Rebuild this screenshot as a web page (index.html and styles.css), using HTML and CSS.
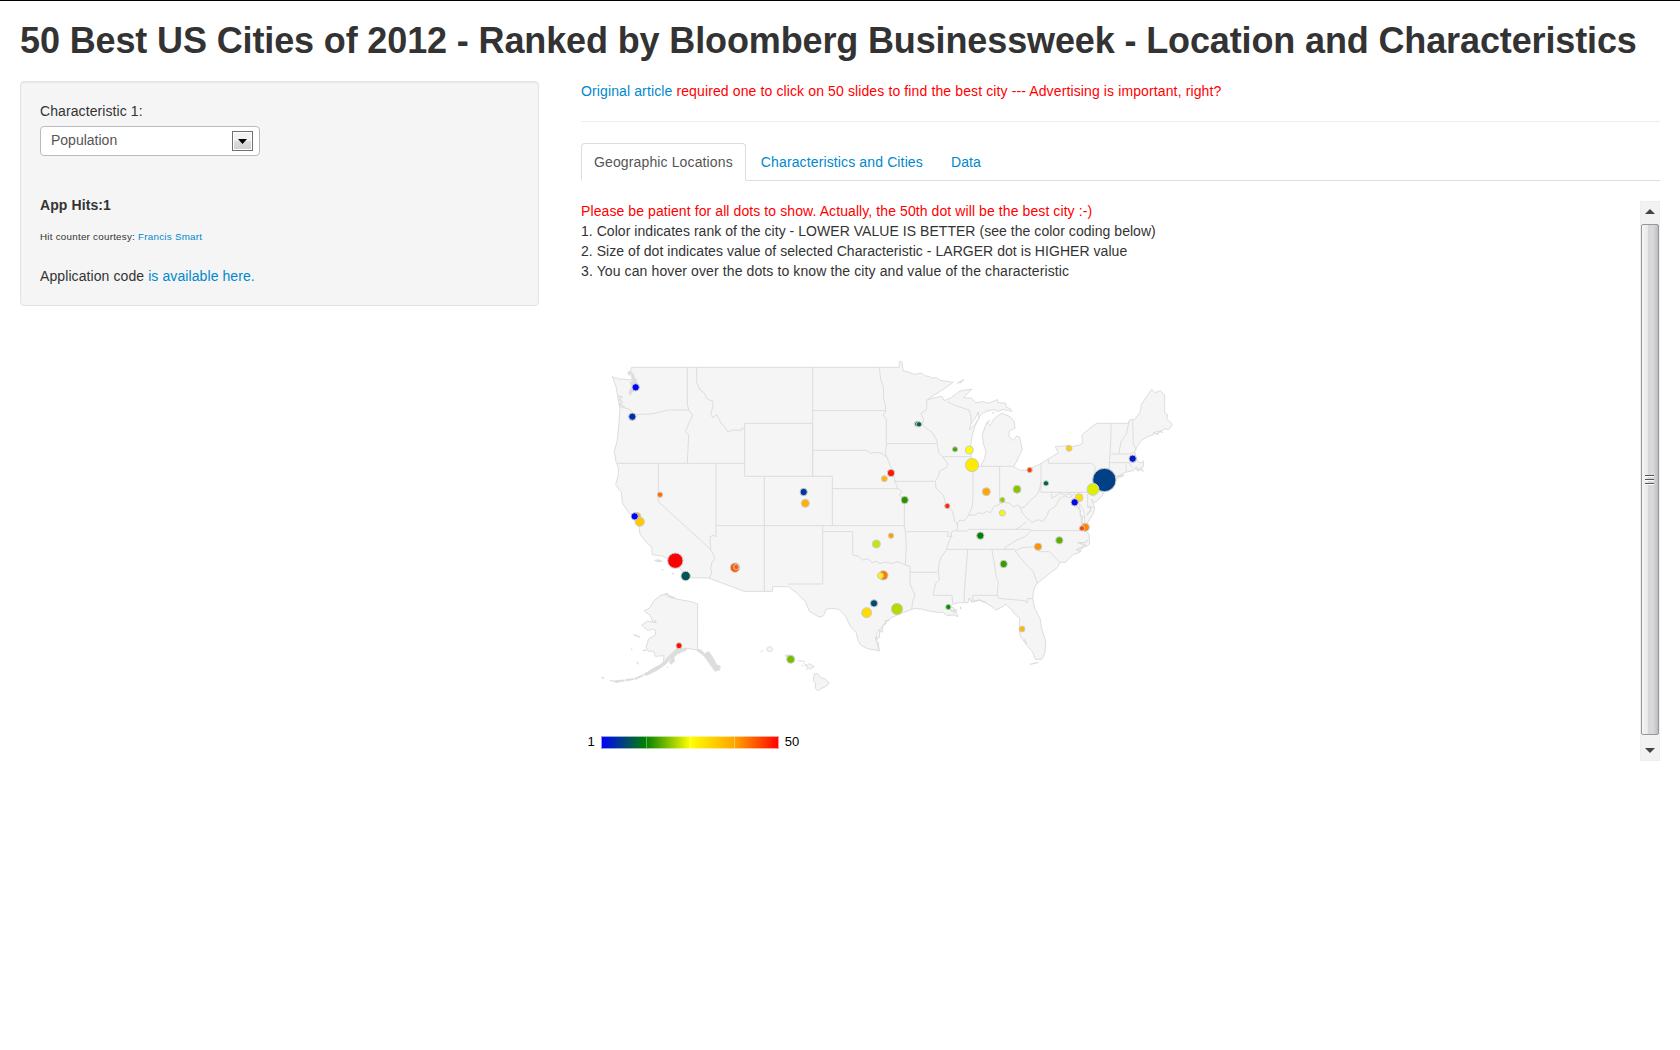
FILE: index.html
```html
<!DOCTYPE html>
<html lang="en">
<head>
<meta charset="utf-8">
<title>50 Best US Cities of 2012</title>
<link rel="stylesheet" href="styles.css">
</head>
<body>
<h1>50 Best US Cities of 2012 - Ranked by Bloomberg Businessweek - Location and Characteristics</h1>
<div class="row">
  <aside class="well">
    <label>Characteristic 1:</label>
    <div class="select"><span>Population</span><span class="arrow"><svg width="9" height="5" viewBox="0 0 9 5"><path d="M0 0H9L4.5 5Z"/></svg></span></div>
    <h5>App Hits:1</h5>
    <p class="small">Hit counter courtesy: <a href="#">Francis Smart</a></p>
    <p>Application code <a href="#">is available here.</a></p>
  </aside>
  <main>
    <p class="red lead"><a href="#">Original article</a> required one to click on 50 slides to find the best city --- Advertising is important, right?</p>
    <hr>
    <nav class="tabs"><a class="active" href="#">Geographic Locations</a><a href="#">Characteristics and Cities</a><a href="#">Data</a></nav>
    <div class="pane">
      <div class="content">
        <div class="red">Please be patient for all dots to show. Actually, the 50th dot will be the best city :-)</div>
        <div class="tight">1. Color indicates rank of the city - LOWER VALUE IS BETTER (see the color coding below)</div>
        <div class="tight">2. Size of dot indicates value of selected Characteristic - LARGER dot is HIGHER value</div>
        <div class="wide">3. You can hover over the dots to know the city and value of the characteristic</div>
        <svg class="map" width="600" height="350" viewBox="-27 -27 1800 1050">
          <!-- contiguous states -->
          <path class="land" d="M67 79L74 84 82 84 91 88 100 87 118 90 126 88 127 78 122 66 124 52H928V34L936 36 938 55 941 63 958 67 972 73 990 70 997 70 1005 78 1018 79 1026 85 1040 83 1051 91 1069 94 1090 97 1060 118 1022 142 1010 151 1030 144 1056 139 1062 152 1082 144 1100 130 1111 123 1132 119 1146 118 1130 132 1121 143 1145 145 1158 158 1180 155 1195 160 1222 149 1224 158 1248 160 1248 170 1263 178 1266 184 1240 178 1225 184 1211 179 1194 182 1178 190 1166 202 1165 186 1156 204 1143 222 1138 239 1153 226 1168 202 1155 228 1147 255 1141 290 1142 310 1150 340 1158 349H1172L1184 325 1188 305 1180 280 1177 255 1183 237 1191 216 1200 227 1210 210 1222 198 1237 190 1260 200 1273 215 1275 235 1258 243 1256 260 1270 271 1280 258 1288 261 1292 275 1297 300 1287 318 1281 333 1271 350 1292 362 1318 358 1354 340 1405 308 1396 290 1430 287 1437 291 1470 285 1479 277 1475 256 1500 234 1520 220H1616L1620 209 1635 208 1651 185 1654 164 1670 140 1685 118 1695 128 1711 122 1724 135V188L1732 193 1731 208 1738 213 1747 225 1735 239 1725 236 1711 246 1697 245 1689 255 1675 259 1655 270 1642 289 1634 305 1638 322 1645 337 1657 338 1660 332 1660 350 1645 360 1640 350 1630 362 1605 367 1585 378 1600 377 1577 387 1560 392 1556 397 1548 410 1536 438 1520 454 1509 458 1505 448 1514 475 1510 491 1500 506 1488 527 1484 540 1497 552 1499 582 1490 588 1478 592 1468 608 1451 613 1432 630 1427 637 1410 637 1402 653 1380 669 1358 688 1340 701 1331 720 1328 745 1334 775 1351 808 1354 832 1367 873 1365 908 1356 927 1337 929 1327 905 1310 885 1290 857 1288 822 1290 805 1279 797 1264 779 1248 763 1235 772 1217 780 1207 770 1184 757 1165 750 1148 755 1137 744 1134 758 1105 758 1090 762 1075 770 1092 774 1098 785 1104 800 1090 795 1073 797 1058 787 1040 787 1018 783 995 777 975 775 955 782 930 792 910 800 890 812 878 830 862 844 858 863 863 885 868 903 856 900 832 896 812 885 803 868 799 848 782 831 767 799 747 778 725 775 708 778 701 797 690 802 672 793 657 782 646 754 635 745 622 730 595 710H548V724H463L355 684 300 683 285 678 268 652 252 630 230 625 218 618 187 614 185 592 165 572 150 552 148 535 140 518 128 499 115 487 97 458 94 427 77 404 85 375 85 352 78 335 73 305 82 270 87 220 90 175 85 150 78 110Z"/>
          <!-- Chesapeake Bay -->
          <path class="water" d="M1468 460L1480 480 1484 505 1482 530 1474 512Z"/>
          <!-- state lines -->
          <g class="lines">
            <path d="M292 52V165L297 180 308 196 299 215 286 245 296 254 292 340M90 170L105 174 120 178 128 192 140 195 155 192 170 193 195 190 235 180H297M82 340H464M320 52V98L330 120 342 128 352 148 368 153 369 168 362 193 368 203 380 194 395 222 405 232 413 246 428 240 453 241 456 233 464 240M464 220H668V379H727V527M464 220V379H668M205 340V455L362 598M378 340V560L370 556 360 560 362 598 375 625 365 639 362 655 365 670 358 684M523 379V724M378 527H943M668 52V379M668 182H886M668 301H830L842 310 860 307 875 310 888 320M727 416H925"/>
            <path d="M868 52L872 88 880 110 881 148 887 170 886 188 879 194 889 207V283L886 310 891 322 902 350 912 382 921 412 936 425 928 435 943 450V527L946 545 949 588 946 645M889 281H1040M910 394H1032M698 527V545H788V615L805 618 818 630 834 626 845 638 860 634 870 641 885 636 905 641 924 635 946 645 960 650V703L975 735 968 754 965 780M946 545H1075L1072 559H1088M960 667H1042M698 545V702H595"/>
            <path d="M1010 151V178L993 190 1001 210 996 223 1007 233 1027 248 1040 270 1043 290 1046 308 1058 320 1074 342 1070 352 1050 362 1045 379 1036 392 1038 415 1060 435 1067 460 1088 485 1094 513 1103 525 1102 540 1085 545 1083 560 1075 580 1070 598 1055 620 1048 635 1045 660 1048 690 1037 700 1029 736H1086L1088 760M1058 320H1142M1072 155L1098 167 1137 180 1143 200 1143 222M1149 350V440L1147 470 1135 495M1100 525L1110 510 1122 513 1135 496 1154 495 1166 488 1178 491 1190 484 1202 488 1211 470 1228 463 1240 456 1258 460 1270 470 1285 465 1292 475 1305 469 1320 452 1341 434 1348 420 1353 395M1229 350V460M1172 349H1271M1353 340V427H1505M1098 543H1134V538H1320V542H1492"/>
            <path d="M1070 598H1276M1292 475L1296 488 1310 504 1326 517 1345 509 1358 515 1370 499 1378 480 1395 470 1410 445 1425 438 1438 444 1455 430M1275 538L1292 530 1308 515M1320 545L1305 560 1280 570 1265 580 1248 590 1244 598M1275 603L1295 593 1340 590 1348 605H1378L1410 637M1275 603L1305 640 1330 665 1342 700M1206 600L1220 685 1225 695 1222 730 1225 745 1305 752 1308 757 1312 758V745L1328 747M1147 736H1222M1147 736L1150 752M1133 600L1123 725V757"/>
            <path d="M1375 328V340H1505L1516 350 1513 373 1526 389M1505 427L1512 440M1493 430V472H1514M1563 220V258L1558 340 1560 370M1617 213L1610 250 1593 275 1587 310M1628 210L1630 280 1638 300M1563 312H1622L1635 305M1558 338H1617L1625 352M1608 340V365M1385 430V445L1410 430 1425 435 1440 430 1447 444 1456 470"/>
          </g>
          <!-- inlets and small islands -->
          <path class="sound" d="M113 66L122 62 124 72 116 76ZM124 76L130 68 133 82 139 90 142 100 137 120 127 126 121 136 116 130 120 118 126 112 120 96 128 92Z"/>
          <g class="islands">
            <path d="M82 138L96 140 88 150 97 156 88 163 98 167 104 172M193 632L205 630 216 634 200 635M215 658L220 660M247 669L251 673M1102 100L1120 90 1110 99M1192 218L1200 211M1207 190L1212 187M1578 380L1603 375M1636 355L1645 362 1653 355 1660 365M1456 465L1473 482 1470 493 1479 501 1474 518 1480 530M1498 465L1503 480 1490 495M1493 570L1485 578 1464 578 1488 586 1460 599 1473 605M1690 247L1702 253 1710 242 1718 248M860 858L857 870 868 860 869 840 876 846 878 827 889 819 885 813 898 812M864 875L867 902M1138 744L1145 756 1170 750 1188 758M1073 766L1085 783 1100 780 1090 790M1112 770V778M1303 868L1310 881M1320 943L1345 937"/>
          </g>
          <!-- Alaska -->
          <path class="land" d="M227 732L237 741 255 746 280 751 304 755 323 762V900L290 895 274 901 261 895 250 908 235 930 220 940 222 917 196 919 191 904 174 903 168 891 176 867 196 855 197 841 187 837 175 842 155 826 172 813 190 817 180 796 163 783 180 773 191 753 210 737Z"/>
          <path class="chain" d="M75 994L105 991 135 987 165 973 200 955 220 939"/>
          <path class="sound" d="M165 971L195 952 216 942 238 916 262 897 288 894 290 900 262 912 252 922 254 934 243 943 238 938 246 920 228 942 205 959 168 977Z"/>
          <path class="sound" d="M322 898L334 900 344 912 352 905 358 907 372 928 380 944 391 948 389 960 375 964 362 946 348 926 338 914 322 903Z"/>
          <path class="islands" d="M222 736L230 730 236 737 255 744M195 810L198 818 185 815M158 902L169 900M130 854L150 861M123 896L127 899M140 935L145 943M34 981L42 986M60 991L75 995 86 998M231 950L233 953"/>
          <path class="speck" d="M339 834L344 836M445 856H449"/>
          <!-- Hawaii -->
          <path class="land" d="M530 895L540 889 549 897 544 904H533ZM673 972L681 970 692 982 707 988 718 1000 705 1010 693 1016 684 1023 676 1015 677 1001 670 991ZM647 948L658 941 673 950 659 957ZM585 916L597 914 604 920 595 930ZM623 932L644 934M635 945L641 949M640 940L649 945M648 959L654 956M512 907L518 900"/>
          <g class="dots">
            <circle cx="137" cy="112" r="11" fill="#00f"/><circle cx="127" cy="200" r="11" fill="#002dae"/><circle cx="210" cy="434" r="8" fill="#ff6d00"/>
            <circle cx="140" cy="499" r="12" fill="#ffb500"/><circle cx="149" cy="515" r="14" fill="#ffc800"/><circle cx="134" cy="499" r="11" fill="#00f"/>
            <circle cx="256" cy="632" r="23" fill="#f00"/><circle cx="287" cy="678" r="14" fill="#005457"/><circle cx="435" cy="653" r="14" fill="#ff5b00"/><circle cx="439" cy="651" r="8" fill="#ff5b00"/>
            <circle cx="641" cy="426" r="11" fill="#00389b"/><circle cx="646" cy="460" r="12" fill="#ffb000"/><circle cx="903" cy="369" r="11" fill="#ff1600"/><circle cx="883" cy="386" r="9" fill="#ffb500"/>
            <circle cx="944" cy="450" r="11" fill="#269200"/><circle cx="903" cy="557" r="8" fill="#ff9e00"/><circle cx="859" cy="582" r="12" fill="#c8e600"/><circle cx="880" cy="676" r="14" fill="#ff7900"/><circle cx="871" cy="677" r="9" fill="#fff000"/>
            <circle cx="852" cy="760" r="11" fill="#004b70"/><circle cx="830" cy="788" r="15" fill="#ffdc00"/><circle cx="921" cy="777" r="17" fill="#b4da00"/><circle cx="602" cy="928" r="12" fill="#78bc00"/><circle cx="267" cy="887" r="9" fill="#ff0f00"/>
            <circle cx="982" cy="222" r="8" fill="#006d28"/><circle cx="987" cy="223" r="8" fill="#005e4b"/><circle cx="1095" cy="298" r="8" fill="#4ba500"/><circle cx="1138" cy="300" r="12" fill="#ff0"/><circle cx="1146" cy="345" r="20" fill="#ffeb00"/>
            <circle cx="1319" cy="360" r="8" fill="#ff3800"/><circle cx="1072" cy="468" r="8" fill="#ff2800"/><circle cx="1189" cy="425" r="12" fill="#ffa500"/><circle cx="1281" cy="418" r="12" fill="#87c400"/><circle cx="1237" cy="450" r="8" fill="#96cb00"/><circle cx="1237" cy="489" r="9" fill="#f5fa00"/>
            <circle cx="1171" cy="557" r="11" fill="#008000"/><circle cx="1241" cy="642" r="11" fill="#379b00"/><circle cx="1344" cy="590" r="11" fill="#ff9200"/><circle cx="1408" cy="571" r="11" fill="#5ab000"/><circle cx="1075" cy="771" r="8" fill="#089000"/><circle cx="1296" cy="837" r="9" fill="#ffb700"/>
            <circle cx="1437" cy="295" r="9" fill="#ffcd00"/><circle cx="1368" cy="400" r="8" fill="#006633"/><circle cx="1628" cy="326" r="11" fill="#0019cb"/><circle cx="1543" cy="390" r="35" fill="#004086"/><circle cx="1509" cy="418" r="18" fill="#dcf000"/><circle cx="1467" cy="443" r="12" fill="#ffe100"/><circle cx="1454" cy="457" r="11" fill="#000be9"/><circle cx="1486" cy="532" r="12" fill="#ff8600"/><circle cx="1476" cy="535" r="8" fill="#ff4700"/>
          </g>
        </svg>
        <div class="legend"><span>1</span><div class="scale"><i></i><i></i><i></i><i></i></div><span>50</span></div>
      </div>
      <div class="scrollbar">
        <svg width="10" height="5" viewBox="0 0 10 5"><path d="M0 5L5 0 10 5Z"/></svg>
        <div class="thumb"><b></b><b></b><b></b></div>
        <svg width="10" height="5" viewBox="0 0 10 5"><path d="M0 0H10L5 5Z"/></svg>
      </div>
    </div>
  </main>
</div>
</body>
</html>
```

FILE: styles.css
```css
* { box-sizing: border-box; }
body { margin: 0; padding: 20px 20px 0; height: 1050px; border-top: 1px solid #000; background: #fff; color: #333; font: 14px/20px "Liberation Sans", Arial, sans-serif; letter-spacing: .09px; overflow: hidden; }
a { color: #08c; text-decoration: none; }
p { margin: 0; }
h1 { margin: 0 0 20px; font-size: 36px; line-height: 40px; letter-spacing: -.13px; white-space: nowrap; }
.row { display: flex; gap: 42px; align-items: flex-start; }
.well { width: 519px; height: 225px; padding: 19px; border: 1px solid #e3e3e3; border-radius: 4px; background: #f5f5f5; box-shadow: inset 0 1px 1px rgba(0,0,0,.05); }
label { display: block; margin-bottom: 5px; }
.select { display: flex; justify-content: space-between; align-items: center; width: 220px; height: 30px; padding: 0 6px 2px 10px; border: 1px solid #bbb; border-radius: 4px; background: #fff; color: #555; letter-spacing: 0; }
.arrow { display: flex; align-items: center; justify-content: center; width: 21px; height: 20px; margin-top: 2px; border: 1px solid #707070; background: linear-gradient(#f2f2f2 50%, #ddd 50%, #cfcfcf); box-shadow: inset 0 0 0 1px #fff; }
h5 { margin: 39px 0 11px; font-size: 14px; line-height: 20px; }
.small { margin-bottom: 19px; font-size: 9.8px; line-height: 21px; letter-spacing: .25px; }
main { width: 1079px; }
.red { color: #f00; }
.lead { letter-spacing: .12px; }
.tight { letter-spacing: .045px; }
.wide { letter-spacing: .11px; }
hr { margin: 20px 0; border: 0; border-top: 1px solid #eee; }
.tabs { display: flex; gap: 2px; height: 39px; margin: 0 0 20px; padding-top: 1px; border-bottom: 1px solid #ddd; letter-spacing: .13px; }
.tabs a { height: 38px; padding: 8px 12px; border: 1px solid transparent; border-radius: 4px 4px 0 0; }
.tabs .active { border-color: #ddd #ddd #fff; background: #fff; color: #555; }
.pane { display: flex; justify-content: space-between; height: 560px; }
.map { display: block; margin-top: 60px; }
.land { fill: #f5f5f5; stroke: #ddd; stroke-width: 3; stroke-linejoin: round; }
.water { fill: #fff; stroke: #ddd; stroke-width: 3; }
.lines { fill: none; stroke: #ddd; stroke-width: 3; stroke-linejoin: round; }
.islands { fill: none; stroke: #ddd; stroke-width: 4; stroke-linejoin: round; }
.speck { fill: none; stroke: #eee; stroke-width: 2; }
.sound { fill: #ddd; stroke: #ddd; stroke-width: 2; }
.chain { fill: none; stroke: #ddd; stroke-width: 6; stroke-dasharray: 28 2; }
.dots circle { stroke: #ccc; stroke-width: 3; }
.legend { display: flex; align-items: center; gap: 6px; height: 20px; margin: 41px 0 0 6.5px; color: #000; font-size: 13px; line-height: 20px; letter-spacing: 0; }
.scale { display: grid; grid-template-columns: repeat(4, 1fr); width: 178px; height: 13px; border: 1px solid rgba(255,255,255,.6); background: linear-gradient(90deg, #00f, #008000 25%, #ff0 50%, #ffa500 75%, #f00) border-box; }
.scale i + i { border-left: 1px solid rgba(255,255,255,.35); }
.scrollbar { display: flex; flex-direction: column; align-items: center; justify-content: space-between; width: 20px; padding: 7px 1px 7px 0; border: 1px solid #eee; background: #f2f2f2; }
.scrollbar path { fill: #444; }
.thumb { display: flex; flex-direction: column; align-items: center; justify-content: center; gap: 3px; width: 18px; height: 511px; margin-bottom: 3px; border: 1px solid #979797; border-radius: 2px; background: linear-gradient(90deg, #f5f5f5, #e8e8e8 38%, #d6d7d9 40%, #d8d9db 70%, #bcbcbe); }
.thumb b { width: 9px; height: 1px; background: #555; box-shadow: 0 1px #fff; }
```
